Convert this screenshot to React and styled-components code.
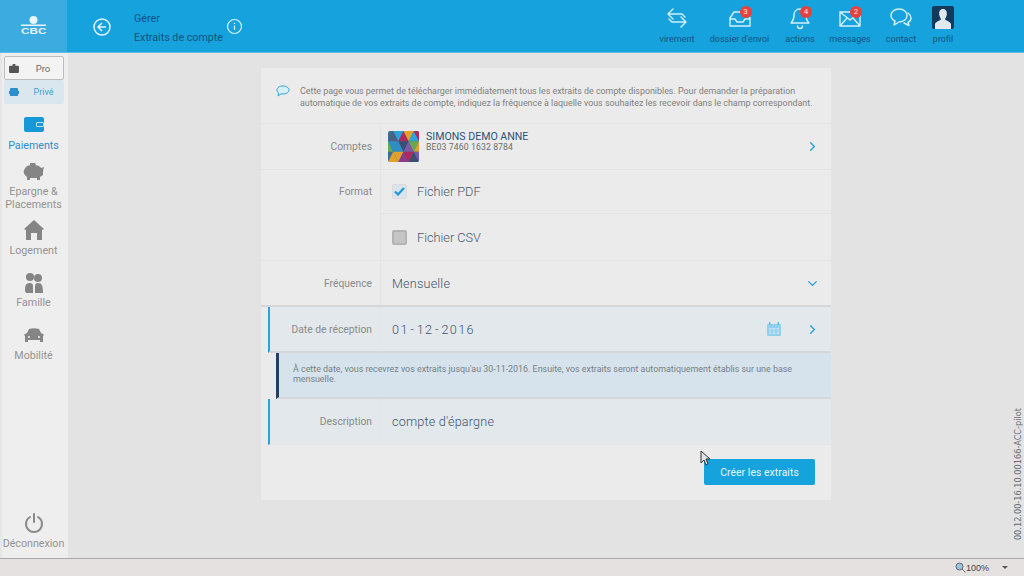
import React from 'react';
import styled, {createGlobalStyle} from 'styled-components';
import {ChevronRight, ChevronDown} from 'lucide-react';

const Global = createGlobalStyle`
  html, body { margin: 0; padding: 0; height: 100%; overflow: hidden; }
  body { font-family: Roboto, "Liberation Sans", sans-serif; background: #e3e3e3; }
  * { box-sizing: border-box; }
`;

const Page = styled.div`
  width: 1024px;
  height: 576px;
  display: flex;
  flex-direction: column;
  position: relative;
  overflow: hidden;
`;

const Header = styled.header`
  height: 53px;
  flex: none;
  display: flex;
  background: #16a3dd;
  border-bottom: 1px solid #5dbde6;
`;

const LogoBlock = styled.div`
  width: 67px;
  background: #3cabdf;
  display: flex;
  flex-direction: column;
  align-items: center;
  justify-content: center;
  color: #e8f5fb;
`;

const LogoText = styled.span`
  font-family: "Liberation Sans", sans-serif;
  font-weight: 700;
  font-size: 9px;
  line-height: 9px;
  transform: scaleX(1.3);
  margin-top: -1px;
`;

const Back = styled.div`
  width: 18px;
  height: 18px;
  margin: 18px 23px 0 26px;
  flex: none;
`;

const Crumbs = styled.div`
  width: 92px;
  flex: none;
  padding-top: 9px;
  font-size: 10.7px;
  line-height: 19px;
  color: #10527f;
  white-space: nowrap;
`;

const InfoIcon = styled.div`
  width: 17px;
  height: 17px;
  margin-top: 18px;
  flex: none;
`;

const Actions = styled.nav`
  margin-left: auto;
  padding-right: 66px;
  display: flex;
  align-items: flex-start;
`;

const Action = styled.div`
  width: ${p => p.$w}px;
  height: 100%;
  display: flex;
  flex-direction: column;
  align-items: center;
  padding-top: 6px;
  font-size: 9px;
  color: #10527f;
  white-space: nowrap;
`;

const ActionIcon = styled.div`
  height: 24px;
  margin-bottom: 4px;
  position: relative;
  display: flex;
  justify-content: center;
`;

const Badge = styled.span`
  position: absolute;
  top: 0;
  left: 50%;
  margin-left: 0;
  width: 12px;
  height: 12px;
  border-radius: 50%;
  background: #e8413c;
  color: #fbe3e0;
  font-size: 8px;
  line-height: 12px;
  text-align: center;
`;

const Body = styled.div`
  flex: 1;
  display: flex;
  min-height: 0;
`;

const Sidebar = styled.aside`
  width: 68px;
  flex: none;
  background: #eeeeee;
  border-left: 2px solid #e6e6e6;
  display: flex;
  flex-direction: column;
  align-items: center;
  padding: 3px 3px 0 0;
  color: #8d8d8d;
`;

const Segments = styled.div`
  width: 60px;
  margin-bottom: 9px;
`;

const Segment = styled.div`
  height: 24px;
  display: flex;
  align-items: center;
  font-size: ${p => (p.$on ? 9.5 : 9)}px;
  padding-left: ${p => (p.$on ? 4 : 5)}px;
  border-radius: 2px;
  color: ${p => (p.$on ? '#6c6c6c' : '#3f9dd3')};
  background: ${p => (p.$on ? '#f3f3f3' : '#dbe7ef')};
  border: ${p => (p.$on ? '1px solid #bdbdbd' : '0 solid transparent')};
`;

const SegmentLabel = styled.span`
  flex: 1;
  text-align: center;
  padding-left: 5px;
`;

const NavItem = styled.div`
  width: 100%;
  height: ${p => p.$h}px;
  display: flex;
  flex-direction: column;
  align-items: center;
  text-align: center;
  font-size: 10.7px;
  line-height: 13px;
  color: ${p => (p.$active ? '#2e8fcb' : '#939393')};
`;

const NavIcon = styled.div`
  height: 24px;
  margin-bottom: ${p => (p.$tight ? 1 : 2)}px;
  display: flex;
  align-items: center;
`;

const Logout = styled(NavItem)`
  margin-top: auto;
  height: auto;
  padding-bottom: 8px;
`;

const Main = styled.main`
  flex: 1;
  display: flex;
  justify-content: center;
  padding-top: 15px;
`;

const Card = styled.section`
  width: 570px;
  height: 432px;
  background: #ebebeb;
  display: flex;
  flex-direction: column;
`;

const Intro = styled.div`
  height: 56px;
  flex: none;
  display: flex;
  padding: 18px 14px 0 15px;
  font-size: 8.9px;
  line-height: 11.5px;
  color: #7f7f7f;
  border-bottom: 1px solid #e4e4e4;
`;

const IntroIcon = styled.div`
  width: 24px;
  flex: none;
  margin-top: -1px;
`;

const Row = styled.div`
  height: 46px;
  flex: none;
  display: flex;
  align-items: stretch;
  margin-left: ${p => (p.$marked ? 7 : 0)}px;
  background: ${p => (p.$marked ? '#e2e8ec' : 'transparent')};
  border-left: ${p => (p.$marked ? '2px solid #22a6dc' : '0 solid transparent')};
  border-bottom: ${p => (p.$strong ? '2px solid #d4d7d9' : '1px solid #e4e4e4')};
`;

const Label = styled.div`
  width: ${p => (p.$marked ? 111 : 120)}px;
  flex: none;
  padding: ${p => p.$top || 16}px 8px 0 0;
  text-align: right;
  font-size: 10.3px;
  line-height: 14px;
  color: #8a8a8a;
  border-right: 1px solid #e5e5e5;
`;

const Value = styled.div`
  flex: 1;
  display: flex;
  align-items: center;
  padding: 0 11px;
  font-size: 12.6px;
  font-weight: 300;
  color: #3f556e;
  letter-spacing: ${p => (p.$spaced ? '1.4px' : '0.2px')};
  word-spacing: ${p => (p.$spaced ? '-3px' : '0')};
`;

const AccountThumb = styled.div`
  width: 31px;
  height: 31px;
  margin: 0 7px 0 -4px;
  flex: none;
  border-radius: 2px;
  overflow: hidden;
`;

const AccountText = styled.div`
  flex: 1;
  margin-top: -10px;
  font-weight: 400;
`;

const AccountName = styled.div`
  font-size: 10.6px;
  line-height: 11px;
  color: #2d5279;
  letter-spacing: 0;
`;

const AccountIban = styled.div`
  font-size: 8.7px;
  line-height: 10px;
  color: #6d6d6d;
  letter-spacing: 0.1px;
`;

const FormatRow = styled(Row)`
  height: 91px;
`;

const Options = styled.div`
  flex: 1;
  display: flex;
  flex-direction: column;
`;

const Option = styled.div`
  flex: none;
  height: ${p => (p.$line ? 44 : 46)}px;
  display: flex;
  align-items: center;
  padding-left: 11px;
  font-size: 12.7px;
  font-weight: 300;
  color: #47596f;
  border-bottom: ${p => (p.$line ? '1px solid #e4e4e4' : '0')};
`;

const Check = styled.span`
  width: 15px;
  height: 15px;
  margin-right: 10px;
  border-radius: 2px;
  background: ${p => (p.$on ? '#d9e4ec' : '#c4c4c4')};
  border: ${p => (p.$on ? '1px solid #e0d8dc' : '2px solid #b3b3b3')};
  display: flex;
  align-items: center;
  justify-content: center;
`;

const Trail = styled.div`
  margin-left: auto;
  display: flex;
  align-items: center;
  gap: 24px;
`;

const Note = styled.div`
  height: 46px;
  flex: none;
  margin-left: 15px;
  padding: 12px 24px 0 14px;
  background: #d6e3ec;
  border-left: 3px solid #23405f;
  border-bottom: 2px solid #d4d7d9;
  font-size: 8.9px;
  line-height: 9.5px;
  color: #7a7f84;
`;

const Footer = styled.div`
  flex: 1;
  display: flex;
  justify-content: flex-end;
  padding: 14px 16px 0 0;
`;

const Button = styled.button`
  width: 111px;
  height: 26px;
  border: 0;
  border-radius: 2px;
  background: #16a3dd;
  color: #e6f6fd;
  font-family: Roboto, sans-serif;
  font-size: 10.3px;
  letter-spacing: 0.1px;
`;

const Version = styled.div`
  position: absolute;
  right: 1px;
  bottom: 36px;
  writing-mode: vertical-rl;
  transform: rotate(180deg);
  font-family: "DejaVu Sans", sans-serif;
  font-size: 8.2px;
  line-height: 10px;
  color: #6a7079;
`;

const Cursor = styled.svg`
  position: absolute;
  left: 700px;
  top: 450px;
`;

const StatusBar = styled.footer`
  height: 18px;
  flex: none;
  background: #e6e1e1;
  border-top: 1px solid #a9a9a9;
  display: flex;
  align-items: center;
  justify-content: flex-end;
  padding-right: 16px;
  font-family: "Liberation Sans", sans-serif;
  font-size: 9px;
  color: #444;
`;

const Zoom = styled.span`
  display: flex;
  align-items: center;
  gap: 0;
  margin-right: 13px;
`;

const Caret = styled.span`
  width: 0;
  height: 0;
  border-left: 3px solid transparent;
  border-right: 3px solid transparent;
  border-top: 3px solid #555;
`;

const tile = ['#4d5f80', '#b02a5f', '#2aa3d6', '#6aa84f', '#2f8fc4', '#7d5aa6', '#e2a12b', '#8e3b8e', '#3a4f72'];

const Mosaic = () => (
  <svg width="31" height="31" viewBox="0 0 30 30">
    <rect width="30" height="30" fill="#3d6f94" />
    {[0, 1, 2].map(r =>
      [0, 1, 2, 3].map(c => {
        const x = c * 10 - (r % 2 ? 5 : 0);
        const y = r * 10;
        return (
          <g key={`${r}-${c}`}>
            <polygon points={`${x},${y + 10} ${x + 5},${y} ${x + 10},${y + 10}`} fill={tile[(r * 3 + c) % 9]} />
            <polygon points={`${x + 5},${y} ${x + 15},${y} ${x + 10},${y + 10}`} fill={tile[(r * 2 + c * 4 + 2) % 9]} />
          </g>
        );
      })
    )}
  </svg>
);

const line = {fill: 'none', stroke: '#d5f0fb', strokeWidth: 1.4, strokeLinecap: 'round', strokeLinejoin: 'round'};

const Transfer = () => (
  <svg width="24" height="24" viewBox="0 0 24 24" {...line}>
    <path d="M8 3 3 8l5 5M3 8h14l3 3" />
    <path d="M16 11l5 5-5 5M21 16H7l-3-3" />
  </svg>
);
const Tray = () => (
  <svg width="24" height="24" viewBox="0 0 24 24" {...line}>
    <path d="M6 6h12l4 6v8H2v-8zM2 13h5l2 3h6l2-3h5" />
  </svg>
);
const Bell = () => (
  <svg width="24" height="24" viewBox="0 0 24 24" {...line}>
    <path d="M12 3c-4 0-6 3-6 6 0 5-2 7-3 8h18c-1-1-3-3-3-8 0-3-2-6-6-6zM9.500 20a2.500 2.500 0 0 0 5 0" />
  </svg>
);
const Mail = () => (
  <svg width="24" height="24" viewBox="0 0 24 24" {...line}>
    <path d="M2 6h20v14H2zM2 6l10 8 10-8M2 20l7-8M22 20l-7-8" />
  </svg>
);
const Chat = () => (
  <svg width="24" height="24" viewBox="0 0 24 24" {...line}>
    <path d="M10 3c5 0 8 3 8 6.500S15 16 10 16l-5 3 1-4c-2-1-4-3-4-5.500C2 6 5 3 10 3z" />
    <path d="M19 7c2 1.500 3 3 3 5 0 2-1 3.500-3 4.500l1 3-5-2.500" />
  </svg>
);
const Avatar = () => (
  <svg width="22" height="23" viewBox="0 0 22 23">
    <rect width="22" height="23" rx="2" fill="#123a5c" />
    <path d="M11 3c3 0 4.200 2.500 3.800 5.500-.3 2-1.300 3.500-1.800 4.500 0 1.500 5 2 6 5v5H3v-5c1-3 6-3.500 6-5-.5-1-1.500-2.500-1.800-4.500C6.800 5.500 8 3 11 3z" fill="#dfe9ef" />
  </svg>
);

const App = () => (
  <Page>
    <Global />
    <Header>
      <LogoBlock>
        <svg width="25" height="12" viewBox="0 0 25 12">
          <circle cx="12.500" cy="4" r="4" fill="#e8f5fb" />
          <rect x="0" y="8.500" width="25" height="1.500" fill="#e8f5fb" />
        </svg>
        <LogoText>CBC</LogoText>
      </LogoBlock>
      <Back>
        <svg width="18" height="18" viewBox="0 0 18 18" fill="none" stroke="#e3f5fc" strokeWidth="1.500">
          <circle cx="9" cy="9" r="8" />
          <path d="M9 5 5 9l4 4M5 9h8" />
        </svg>
      </Back>
      <Crumbs>
        <div>Gérer</div>
        <div>Extraits de compte</div>
      </Crumbs>
      <InfoIcon>
        <svg width="17" height="17" viewBox="0 0 17 17" fill="none" stroke="#e3f5fc" strokeWidth="1.200">
          <circle cx="8.500" cy="8.500" r="7" />
          <path d="M8.500 7.500v4.500M8.500 4.800v1.200" />
        </svg>
      </InfoIcon>
      <Actions>
        <Action $w={56}><ActionIcon><Transfer /></ActionIcon>virement</Action>
        <Action $w={69}><ActionIcon><Tray /><Badge>3</Badge></ActionIcon>dossier d'envoi</Action>
        <Action $w={52}><ActionIcon><Bell /><Badge>4</Badge></ActionIcon>actions</Action>
        <Action $w={48}><ActionIcon><Mail /><Badge>2</Badge></ActionIcon>messages</Action>
        <Action $w={54}><ActionIcon><Chat /></ActionIcon>contact</Action>
        <Action $w={30}><ActionIcon><Avatar /></ActionIcon>profil</Action>
      </Actions>
    </Header>
    <Body>
      <Sidebar>
        <Segments>
          <Segment $on>
            <svg width="10" height="9" viewBox="0 0 11 10"><path d="M1 2h3V0h3v2h3a1 1 0 0 1 1 1v6a1 1 0 0 1-1 1H1a1 1 0 0 1-1-1V3a1 1 0 0 1 1-1z" fill="#555" /></svg>
            <SegmentLabel>Pro</SegmentLabel>
          </Segment>
          <Segment>
            <svg width="10" height="8" viewBox="0 0 10 8"><path d="M2 0h6a1 1 0 0 1 1 1v2h1v3H9v2H1V6H0V3h1V1a1 1 0 0 1 1-1z" fill="#2c8fd0" /></svg>
            <SegmentLabel>Privé</SegmentLabel>
          </Segment>
        </Segments>
        <NavItem $h={47} $active>
          <NavIcon>
            <svg width="20" height="16" viewBox="0 0 20 16"><rect width="20" height="15" rx="2" fill="#1799d8" /><rect x="12" y="5" width="8" height="5" rx="1.500" fill="#bfe6f7" /><rect x="13" y="6" width="6" height="3" fill="#1799d8" /></svg>
          </NavIcon>
          Paiements
        </NavItem>
        <NavItem $h={58}>
          <NavIcon $tight>
            <svg width="21" height="19" viewBox="0 0 21 19"><path d="M7 0h5l1 2h-6zM3 4c2-2 5-2 8-2 3 0 6 1 7 3l3-1-1 4v4l-3 2v3h-3v-2H7v2H4v-3C1 12 0 9 1 7z" fill="#858585" /></svg>
          </NavIcon>
          Epargne &amp;<br />Placements
        </NavItem>
        <NavItem $h={53}>
          <NavIcon>
            <svg width="20" height="20" viewBox="0 0 20 20"><path d="M10 0 20 9l-2 1v10h-5v-7H7v7H2V10L0 9z" fill="#858585" /></svg>
          </NavIcon>
          Logement
        </NavItem>
        <NavItem $h={52}>
          <NavIcon $tight>
            <svg width="20" height="20" viewBox="0 0 20 20" fill="#858585"><circle cx="6" cy="4" r="4" /><circle cx="14" cy="5" r="4" /><path d="M1 18c0-6 1-8 5-8 2 0 3 1 3 3v7H2zM11 20v-7c0-2 1-3 3-3 4 0 5 3 5 10z" /></svg>
          </NavIcon>
          Famille
        </NavItem>
        <NavItem $h={52}>
          <NavIcon>
            <svg width="20" height="15" viewBox="0 0 20 15"><path d="M5 1c3-1 7-1 10 0l2 4 2 1 1 1-1 1v6h-3v-2H4v2H1V8L0 7l1-1 2-1zM5 8a1 1 0 1 0 0 2 1 1 0 0 0 0-2zM15 8a1 1 0 1 0 0 2 1 1 0 0 0 0-2z" fill="#858585" /></svg>
          </NavIcon>
          Mobilité
        </NavItem>
        <Logout>
          <NavIcon>
            <svg width="20" height="20" viewBox="0 0 20 20" fill="none" stroke="#8a8a8a" strokeWidth="2" strokeLinecap="round"><path d="M6 4a8 8 0 1 0 8 0M10 1v8" /></svg>
          </NavIcon>
          Déconnexion
        </Logout>
      </Sidebar>
      <Main>
        <Card>
          <Intro>
            <IntroIcon>
              <svg width="14" height="12" viewBox="0 0 14 12" fill="#d8eef8" stroke="#2ba6dc" strokeWidth="1"><path d="M7 1c3.300 0 6 1.600 6 4s-2.700 4-6 4c-.7 0-1.400 0-2-.2L2 11l.6-3C1.500 7.300 1 6.200 1 5c0-2.400 2.700-4 6-4z" /></svg>
            </IntroIcon>
            <div>Cette page vous permet de télécharger immédiatement tous les extraits de compte disponibles. Pour demander la préparation automatique de vos extraits de compte, indiquez la fréquence à laquelle vous souhaitez les recevoir dans le champ correspondant.</div>
          </Intro>
          <Row>
            <Label>Comptes</Label>
            <Value>
              <AccountThumb><Mosaic /></AccountThumb>
              <AccountText>
                <AccountName>SIMONS DEMO ANNE</AccountName>
                <AccountIban>BE03 7460 1632 8784</AccountIban>
              </AccountText>
              <ChevronRight size={15} color="#2b9fd8" strokeWidth={2.2} />
            </Value>
          </Row>
          <FormatRow>
            <Label $top={15}>Format</Label>
            <Options>
              <Option $line>
                <Check $on>
                  <svg width="11" height="9" viewBox="0 0 11 9" fill="none" stroke="#1c9ad6" strokeWidth="2.200"><path d="M1 4.500 4 7.500 10 1" /></svg>
                </Check>
                Fichier PDF
              </Option>
              <Option>
                <Check />
                Fichier CSV
              </Option>
            </Options>
          </FormatRow>
          <Row $strong>
            <Label>Fréquence</Label>
            <Value>
              Mensuelle
              <Trail><ChevronDown size={15} color="#2b9fd8" strokeWidth={2.2} /></Trail>
            </Value>
          </Row>
          <Row $marked $strong>
            <Label $marked>Date de réception</Label>
            <Value $spaced>
              01 - 12 - 2016
              <Trail>
                <svg width="14" height="14" viewBox="0 0 14 14"><rect y="2" width="14" height="12" rx="1" fill="#8ed0ee" /><rect x="2" y="0" width="1.500" height="3" fill="#5dbde6" /><rect x="10.500" y="0" width="1.500" height="3" fill="#5dbde6" /><rect x="2" y="6" width="10" height="6" fill="#c7e6f5" /><path d="M2 8h10M2 10h10M5 6v6M9 6v6" stroke="#6cc0e6" strokeWidth=".6" /></svg>
                <ChevronRight size={15} color="#2b9fd8" strokeWidth={2.2} />
              </Trail>
            </Value>
          </Row>
          <Note>À cette date, vous recevrez vos extraits jusqu'au 30-11-2016. Ensuite, vos extraits seront automatiquement établis sur une base mensuelle.</Note>
          <Row $marked>
            <Label $marked>Description</Label>
            <Value>compte d'épargne</Value>
          </Row>
          <Footer>
            <Button>Créer les extraits</Button>
          </Footer>
        </Card>
      </Main>
    </Body>
    <StatusBar>
      <Zoom>
        <svg width="11" height="11" viewBox="0 0 11 11" fill="#9cc3dc" stroke="#667" strokeWidth="1"><circle cx="4.500" cy="4.500" r="3.500" /><path d="M7 7l3.500 3.500" /></svg>
        100%
      </Zoom>
      <Caret />
    </StatusBar>
    <Version>00.12.00-16.10.00166-ACC-pilot</Version>
    <Cursor width="11" height="16" viewBox="0 0 11 16">
      <path d="M1 1v12l3-3 2 5 2-1-2-5h4z" fill="#dfe4e8" stroke="#333" strokeWidth="1" />
    </Cursor>
  </Page>
);

export default App;
